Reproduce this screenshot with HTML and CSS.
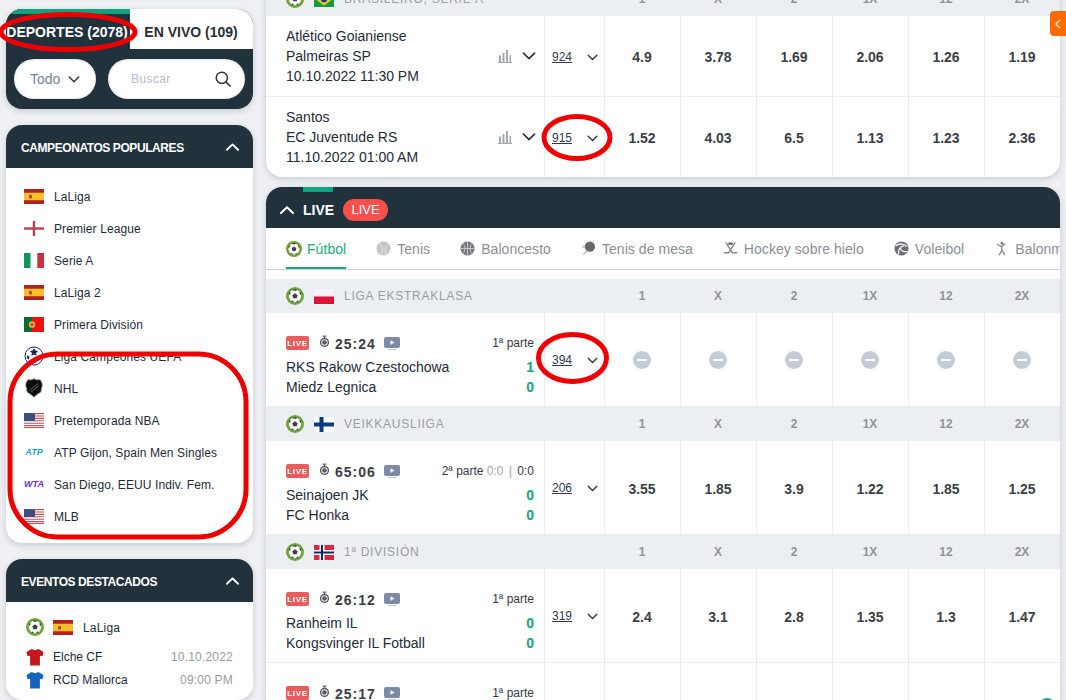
FILE: index.html
```html
<!DOCTYPE html>
<html lang="es">
<head>
<meta charset="utf-8">
<title>Apuestas</title>
<link rel="stylesheet" href="styles.css">
</head>
<body>
<svg class="defs" width="0" height="0" aria-hidden="true">
  <symbol id="chev" viewBox="0 0 14 8"><path d="M1.5 1.2 7 6.6l5.5-5.4" fill="none" stroke="currentColor" stroke-width="1.7" stroke-linecap="round" stroke-linejoin="round"/></symbol>
  <symbol id="up" viewBox="0 0 14 8"><path d="M1 7 7 1.2 13 7" fill="none" stroke="currentColor" stroke-width="2" stroke-linecap="round" stroke-linejoin="round"/></symbol>
  <symbol id="ball" viewBox="0 0 18 18"><circle cx="9" cy="9" r="7.6" fill="#fff" stroke="#6fa43a" stroke-width="2.8"/><path d="M9 6.200 11.700 8.200 10.700 11.200H7.300L6.300 8.200Z" fill="#3c4048"/><path d="M6.800 3 9 4l2.200-1-.7-.8h-3ZM3 8.200l1.500-1.700-.4-2L3 6ZM15 8.200l-1.500-1.700.4-2L15 6ZM5.200 14l1.700-.6.9 1.700-1.500-.2ZM12.800 14l-1.700-.6-.9 1.700 1.500-.2Z" fill="#3c4048"/></symbol>
  <symbol id="es" viewBox="0 0 20 15"><rect width="20" height="15" fill="#b3201f"/><rect y="3.750" width="20" height="7.500" fill="#f5c02a"/><rect x="5" y="6" width="3" height="3.400" rx=".6" fill="#b5471e"/></symbol>
  <symbol id="en" viewBox="0 0 20 15"><rect width="20" height="15" fill="#fff"/><rect y="6.300" width="20" height="2.400" fill="#bf4054"/><rect x="8.800" width="2.400" height="15" fill="#bf4054"/></symbol>
  <symbol id="it" viewBox="0 0 20 15"><rect width="6.700" height="15" fill="#12935a"/><rect x="6.700" width="6.600" height="15" fill="#fff"/><rect x="13.300" width="6.700" height="15" fill="#cd2f42"/></symbol>
  <symbol id="pt" viewBox="0 0 20 15"><rect width="20" height="15" fill="#ef1010"/><rect width="8" height="15" fill="#0a6a32"/><circle cx="8" cy="7.500" r="3.200" fill="#e9b83a"/><circle cx="8" cy="7.500" r="1.600" fill="#c7402c"/></symbol>
  <symbol id="us" viewBox="0 0 20 15"><rect width="20" height="15" fill="#fff"/><path d="M0 .6h20M0 3h20M0 5.400h20M0 7.800h20M0 10.200h20M0 12.600h20M0 14.500h20" stroke="#c0505a" stroke-width="1.100"/><rect width="11" height="8" fill="#3f4d82"/></symbol>
  <symbol id="pl" viewBox="0 0 20 15"><rect width="20" height="7.500" fill="#f4f4f6"/><rect y="7.500" width="20" height="7.500" fill="#dc143c"/></symbol>
  <symbol id="fi" viewBox="0 0 20 15"><rect width="20" height="15" fill="#fff"/><rect y="5.500" width="20" height="4" fill="#0b3a80"/><rect x="5.500" width="4" height="15" fill="#0b3a80"/></symbol>
  <symbol id="no" viewBox="0 0 20 15"><rect width="20" height="15" fill="#d9283a"/><rect y="5" width="20" height="5" fill="#fff"/><rect x="5.500" width="5" height="15" fill="#fff"/><rect y="6.500" width="20" height="2" fill="#0a2a6c"/><rect x="7" width="2" height="15" fill="#0a2a6c"/></symbol>
  <symbol id="br" viewBox="0 0 20 15"><rect width="20" height="15" fill="#169b3e"/><path d="M10 1.500 18 7.500 10 13.500 2 7.500Z" fill="#f2d21d"/><circle cx="10" cy="7.500" r="3" fill="#1f3c8c"/></symbol>
  <symbol id="ucl" viewBox="0 0 20 20"><circle cx="10" cy="10" r="9" fill="#fff" stroke="#1c2b59" stroke-width="1"/><path d="m10 2 1.300 2.600 2.800.3-2 2 .5 2.800L10 8.400 7.400 9.700l.5-2.800-2-2 2.800-.3ZM3.500 9l1.900 1.800-.4 2.600-2.300-1.200ZM16.500 9l-1.900 1.800.4 2.600 2.300-1.200ZM10 12.500l2.200 1.600-.8 2.600H8.600l-.8-2.600Z" fill="#1c2b59"/></symbol>
  <symbol id="nhl" viewBox="0 0 18 20"><path d="M9 .6c1.800 1.300 3.600 1.500 6 .9 1.500 2 2.300 3.600 2.300 5.400 0 2.400-1 3.500-1 5.500 0 2.800-3.800 2.800-7.300 7-3.500-4.200-7.300-4.200-7.300-7 0-2-1-3.100-1-5.500C.7 5.100 1.500 3.500 3 1.500c2.400.6 4.200.4 6-.9Z" fill="#0c0c0e" stroke="#a9aab0" stroke-width=".9"/><path d="M4.500 12.500 13 5.500M6 14l8-6.500" stroke="#77787e" stroke-width=".8"/></symbol>
  <symbol id="shirt" viewBox="0 0 18 18"><path d="M5.600 1 9 2.200 12.400 1 17.500 4l-1 4.300-2.600-.6V17.500H4.100V7.700l-2.600.6L.5 4Z" fill="currentColor"/></symbol>
  <symbol id="bars" viewBox="0 0 14 14"><path d="M1 6.500h2V13H1ZM4.500 4H6.500V13h-2ZM8 1h2v12H8ZM11.500 6H13v7h-1.500Z" fill="#a5a9b1"/><rect y="13" width="14" height="1" fill="#a5a9b1"/></symbol>
  <symbol id="search" viewBox="0 0 16 16"><circle cx="6.800" cy="6.800" r="5.600" fill="none" stroke="#30353d" stroke-width="1.500"/><path d="m11 11 4 4" stroke="#30353d" stroke-width="1.700" stroke-linecap="round"/></symbol>
  <symbol id="watch" viewBox="0 0 12 13"><rect x="4" y="0" width="4" height="1.300" fill="#565b64"/><rect x="5.300" y="1" width="1.400" height="2" fill="#565b64"/><circle cx="6" cy="7.500" r="5" fill="#565b64"/><circle cx="6" cy="7.500" r="3.500" fill="#e8e9eb"/><circle cx="6" cy="7.500" r="2.400" fill="#565b64"/></symbol>
  <symbol id="tv" viewBox="0 0 16 13"><rect width="16" height="11" rx="2" fill="#7b8ba6"/><path d="M6.500 3.200 10.500 5.500 6.500 7.800Z" fill="#fff"/><rect x="4" y="12" width="8" height="1" fill="#c3cad6"/></symbol>
  <symbol id="tennis" viewBox="0 0 16 16"><circle cx="8" cy="8" r="7.500" fill="#c4c5c8"/><path d="M3 2.500C7 5 8 10 5.500 14.500M13.500 3C10 5 9 10 11 14.800" fill="none" stroke="#e6e6e8" stroke-width="1"/></symbol>
  <symbol id="basket" viewBox="0 0 16 16"><circle cx="8" cy="8" r="7.500" fill="#77797e"/><path d="M.5 8h15M8 .5v15M3 2.500c3 3 3 8 0 11M13 2.500c-3 3-3 8 0 11" fill="none" stroke="#d6d6d8" stroke-width=".9"/></symbol>
  <symbol id="pingpong" viewBox="0 0 16 16"><circle cx="9.500" cy="6" r="5.500" fill="#66686d"/><path d="M6 9.500 2 13.500l1 1.500 4.500-3.700Z" fill="#b9babd"/><circle cx="3" cy="6" r="1.500" fill="#c8c9cc"/></symbol>
  <symbol id="hockey" viewBox="0 0 16 16"><path d="M3 1.500 10 12.500H15M13 1.500 6 12.500H1" fill="none" stroke="#85878c" stroke-width="1.500"/><rect x="5.500" y="1.500" width="5" height="2.500" rx="1" fill="#5e6066"/></symbol>
  <symbol id="volley" viewBox="0 0 16 16"><circle cx="8" cy="8" r="7.500" fill="#6d6f75"/><path d="M2 5c4-3 9-2 12 1M5 14c-1-4 1-8 6-9M14 11c-3 1-6 0-7-3" fill="none" stroke="#f1f1f2" stroke-width="1.400"/></symbol>
  <symbol id="handball" viewBox="0 0 16 16"><circle cx="8.500" cy="2.500" r="1.500" fill="#75777c"/><path d="M3 3.500 8 6l4-3M8 6l.5 4-3 5M8.500 10l3 5" fill="none" stroke="#8b8d92" stroke-width="1.400"/></symbol>
  <symbol id="left" viewBox="0 0 6 10"><path d="M5 1 1 5l4 4" fill="none" stroke="#ffd9b8" stroke-width="1.600"/></symbol>
</svg>

<div class="page">
  <aside class="side">
    <section class="panel finder">
      <div class="modes">
        <div class="mode mode-on">DEPORTES (2078)</div>
        <div class="mode">EN VIVO (109)</div>
      </div>
      <div class="filters">
        <div class="pill pill-todo">Todo <svg class="chev-l"><use href="#chev"/></svg></div>
        <div class="pill pill-find"><span>Buscar</span><svg class="ico-search"><use href="#search"/></svg></div>
      </div>
    </section>

    <section class="panel">
      <header class="panel-head"><span>CAMPEONATOS POPULARES</span><svg class="up"><use href="#up"/></svg></header>
      <ul class="champs">
        <li><svg class="flag"><use href="#es"/></svg>LaLiga</li>
        <li><svg class="flag"><use href="#en"/></svg>Premier League</li>
        <li><svg class="flag"><use href="#it"/></svg>Serie A</li>
        <li><svg class="flag"><use href="#es"/></svg>LaLiga 2</li>
        <li><svg class="flag"><use href="#pt"/></svg>Primera División</li>
        <li><svg class="flag-tall"><use href="#ucl"/></svg>Liga Campeones UEFA</li>
        <li><svg class="flag-tall"><use href="#nhl"/></svg>NHL</li>
        <li><svg class="flag"><use href="#us"/></svg>Pretemporada NBA</li>
        <li><span class="brand brand-atp">ATP</span>ATP Gijon, Spain Men Singles</li>
        <li><span class="brand brand-wta">WTA</span>San Diego, EEUU Indiv. Fem.</li>
        <li><svg class="flag"><use href="#us"/></svg>MLB</li>
      </ul>
    </section>

    <section class="panel">
      <header class="panel-head"><span>EVENTOS DESTACADOS</span><svg class="up"><use href="#up"/></svg></header>
      <div class="event">
        <div class="event-league"><svg class="ball"><use href="#ball"/></svg><svg class="flag"><use href="#es"/></svg><span>LaLiga</span></div>
        <div class="event-team"><svg class="shirt shirt-red"><use href="#shirt"/></svg><span class="event-name">Elche CF</span><span class="event-when">10.10.2022</span></div>
        <div class="event-team"><svg class="shirt shirt-blue"><use href="#shirt"/></svg><span class="event-name">RCD Mallorca</span><span class="event-when">09:00 PM</span></div>
      </div>
    </section>
  </aside>

  <main class="main">
    <section class="card">
      <div class="grid group">
        <div class="group-name"><svg class="ball"><use href="#ball"/></svg><svg class="flag"><use href="#br"/></svg><span>BRASILEIRO, SERIE A</span></div>
        <b>1</b><b>X</b><b>2</b><b>1X</b><b>12</b><b>2X</b>
      </div>
      <div class="grid row row-pre row-first">
        <div class="match-pre">
          <div class="teams"><div>Atlético Goianiense</div><div>Palmeiras SP</div><div>10.10.2022 11:30 PM</div></div>
          <svg class="bars"><use href="#bars"/></svg><svg class="chev-m"><use href="#chev"/></svg>
        </div>
        <div class="count"><u>924</u><svg class="chev-s"><use href="#chev"/></svg></div>
        <div class="odd">4.9</div><div class="odd">3.78</div><div class="odd">1.69</div><div class="odd">2.06</div><div class="odd">1.26</div><div class="odd">1.19</div>
      </div>
      <div class="grid row row-pre">
        <div class="match-pre">
          <div class="teams"><div>Santos</div><div>EC Juventude RS</div><div>11.10.2022 01:00 AM</div></div>
          <svg class="bars"><use href="#bars"/></svg><svg class="chev-m"><use href="#chev"/></svg>
        </div>
        <div class="count"><u>915</u><svg class="chev-s"><use href="#chev"/></svg></div>
        <div class="odd">1.52</div><div class="odd">4.03</div><div class="odd">6.5</div><div class="odd">1.13</div><div class="odd">1.23</div><div class="odd">2.36</div>
      </div>
    </section>

    <section class="card card-live">
      <header class="live-head">
        <svg class="up"><use href="#up"/></svg>
        <span class="live-title">LIVE</span>
        <span class="live-pill">LIVE</span>
      </header>
      <nav class="tabs">
        <a class="tab tab-on"><svg class="tab-ico"><use href="#ball"/></svg>Fútbol</a>
        <a class="tab"><svg class="tab-ico"><use href="#tennis"/></svg>Tenis</a>
        <a class="tab"><svg class="tab-ico"><use href="#basket"/></svg>Baloncesto</a>
        <a class="tab"><svg class="tab-ico"><use href="#pingpong"/></svg>Tenis de mesa</a>
        <a class="tab"><svg class="tab-ico"><use href="#hockey"/></svg>Hockey sobre hielo</a>
        <a class="tab"><svg class="tab-ico"><use href="#volley"/></svg>Voleibol</a>
        <a class="tab"><svg class="tab-ico"><use href="#handball"/></svg>Balonmano</a>
      </nav>

      <div class="grid group">
        <div class="group-name"><svg class="ball"><use href="#ball"/></svg><svg class="flag"><use href="#pl"/></svg><span>LIGA EKSTRAKLASA</span></div>
        <b>1</b><b>X</b><b>2</b><b>1X</b><b>12</b><b>2X</b>
      </div>
      <div class="grid row row-live">
        <div class="match-live">
          <div class="clock"><span class="badge">LIVE</span><svg class="watch"><use href="#watch"/></svg><span class="time">25:24</span><svg class="tv"><use href="#tv"/></svg><span class="period">1ª parte</span></div>
          <div class="side-score"><span>RKS Rakow Czestochowa</span><b>1</b></div>
          <div class="side-score"><span>Miedz Legnica</span><b>0</b></div>
        </div>
        <div class="count"><u>394</u><svg class="chev-s"><use href="#chev"/></svg></div>
        <div class="odd"><i class="lock"></i></div><div class="odd"><i class="lock"></i></div><div class="odd"><i class="lock"></i></div><div class="odd"><i class="lock"></i></div><div class="odd"><i class="lock"></i></div><div class="odd"><i class="lock"></i></div>
      </div>

      <div class="grid group">
        <div class="group-name"><svg class="ball"><use href="#ball"/></svg><svg class="flag"><use href="#fi"/></svg><span>VEIKKAUSLIIGA</span></div>
        <b>1</b><b>X</b><b>2</b><b>1X</b><b>12</b><b>2X</b>
      </div>
      <div class="grid row row-live">
        <div class="match-live">
          <div class="clock"><span class="badge">LIVE</span><svg class="watch"><use href="#watch"/></svg><span class="time">65:06</span><svg class="tv"><use href="#tv"/></svg><span class="period">2ª parte <em>0:0</em> <em class="sep">|</em> 0:0</span></div>
          <div class="side-score"><span>Seinajoen JK</span><b>0</b></div>
          <div class="side-score"><span>FC Honka</span><b>0</b></div>
        </div>
        <div class="count"><u>206</u><svg class="chev-s"><use href="#chev"/></svg></div>
        <div class="odd">3.55</div><div class="odd">1.85</div><div class="odd">3.9</div><div class="odd">1.22</div><div class="odd">1.85</div><div class="odd">1.25</div>
      </div>

      <div class="grid group">
        <div class="group-name"><svg class="ball"><use href="#ball"/></svg><svg class="flag"><use href="#no"/></svg><span>1ª DIVISIÓN</span></div>
        <b>1</b><b>X</b><b>2</b><b>1X</b><b>12</b><b>2X</b>
      </div>
      <div class="grid row row-live">
        <div class="match-live">
          <div class="clock"><span class="badge">LIVE</span><svg class="watch"><use href="#watch"/></svg><span class="time">26:12</span><svg class="tv"><use href="#tv"/></svg><span class="period">1ª parte</span></div>
          <div class="side-score"><span>Ranheim IL</span><b>0</b></div>
          <div class="side-score"><span>Kongsvinger IL Fotball</span><b>0</b></div>
        </div>
        <div class="count"><u>319</u><svg class="chev-s"><use href="#chev"/></svg></div>
        <div class="odd">2.4</div><div class="odd">3.1</div><div class="odd">2.8</div><div class="odd">1.35</div><div class="odd">1.3</div><div class="odd">1.47</div>
      </div>
      <div class="grid row row-live">
        <div class="match-live">
          <div class="clock"><span class="badge">LIVE</span><svg class="watch"><use href="#watch"/></svg><span class="time">25:17</span><svg class="tv"><use href="#tv"/></svg><span class="period">1ª parte</span></div>
        </div>
        <div class="count"></div>
        <div class="odd"></div><div class="odd"></div><div class="odd"></div><div class="odd"></div><div class="odd"></div><div class="odd"></div>
      </div>
    </section>
  </main>
</div>

<div class="drawer"><svg class="drawer-ico"><use href="#left"/></svg></div>
<div class="to-top"></div>

<svg class="marks" viewBox="0 0 1066 700" aria-hidden="true">
  <ellipse cx="68" cy="32" rx="67" ry="17.500" />
  <ellipse cx="577" cy="137.500" rx="33" ry="21" />
  <ellipse cx="572.500" cy="358" rx="34" ry="23.500" />
  <rect x="10" y="354" width="236" height="183" rx="48" />
</svg>
</body>
</html>
```
FILE: styles.css
```css
* { box-sizing: border-box; }
html, body { margin: 0; height: 700px; overflow: hidden; }
body {
  position: relative;
  background: #eef0f3;
  font-family: "Liberation Sans", Arial, sans-serif;
  color: #232b38;
}
svg { display: block; flex: none; }
.defs { position: absolute; }
.page { display: flex; align-items: flex-start; gap: 13px; padding-left: 6px; }

/* sidebar */
.side { width: 247px; flex: none; display: flex; flex-direction: column; gap: 16px; padding-top: 9px; }
.panel { background: #fff; border-radius: 16px; overflow: hidden; box-shadow: 0 2px 6px rgba(40, 50, 60, .2); }
.finder { background: #22323c; height: 100px; }
.modes { display: flex; height: 40px; }
.mode {
  flex: 1; display: flex; align-items: center; justify-content: center;
  background: #fff; color: #2a2f36; font-size: 14px; font-weight: 700;
  padding-top: 6px; padding-right: 1px;
  white-space: nowrap;
}
.mode-on { flex: none; width: 124px; background: #22323c; color: #fff; border-top: 5px solid #0fa37f; padding-top: 1px; padding-right: 2px; }
.filters { display: flex; gap: 12px; padding: 10px 8px 0; }
.pill { height: 40px; background: #fff; border-radius: 20px; display: flex; align-items: center; }
.pill-todo { width: 82px; padding-left: 16px; gap: 8px; color: #7a8195; font-size: 14px; box-shadow: inset 0 0 3px rgba(120, 130, 150, .4); }
.pill-find { flex: 1; padding: 0 14px 0 23px; justify-content: space-between; color: #b6bbc8; font-size: 12px; letter-spacing: .4px; box-shadow: inset 0 0 3px rgba(120, 130, 150, .4); }
.chev-l { width: 12px; height: 7px; color: #30353d; }
.ico-search { width: 16px; height: 16px; }
.panel-head {
  height: 43px; background: #22323c; color: #fff; font-size: 12px; font-weight: 700;
  display: flex; align-items: center; justify-content: space-between; padding: 0 14px 0 15px;
  letter-spacing: -.42px;
}
.panel-head span { padding-top: 2px; }
.up { width: 13px; height: 8px; color: #fff; }
.champs { list-style: none; margin: 0; padding: 12px 0 11px 18px; }
.champs li { height: 32px; padding-top: 2px; display: flex; align-items: center; gap: 10px; font-size: 12px; letter-spacing: .1px; }
.champs svg, .champs .brand { margin-top: -2px; }
.flag { width: 20px; height: 15px; }
.flag-tall { width: 20px; height: 20px; }
.brand { width: 20px; font-size: 9px; font-weight: 700; font-style: italic; letter-spacing: 0; text-align: center; }
.brand-atp { color: #1ba3d6; }
.brand-wta { color: #6a2bd9; }
.event { padding: 16px 20px 20px; height: 98px; }
.event-league { display: flex; align-items: center; height: 18px; font-size: 12px; letter-spacing: .2px; }
.event-league .flag { margin-left: 9px; }
.event-league span { margin-left: 10px; padding-top: 1px; }
.event-team { display: flex; align-items: center; height: 23px; font-size: 12px; }
.event-league + .event-team { margin-top: 9px; }
.event-name { margin-left: 9px; flex: 1; }
.event-when { color: #9a9a9c; letter-spacing: .2px; }
.ball { width: 18px; height: 18px; }
.shirt { width: 18px; height: 18px; }
.shirt-red { color: #c2181c; }
.shirt-blue { color: #1463c0; }

/* main */
.main { width: 794px; flex: none; margin-top: -18px; display: flex; flex-direction: column; gap: 10px; }
.card { background: #fff; border-radius: 16px; overflow: hidden; box-shadow: 0 2px 6px rgba(40, 50, 60, .2); }
.grid { display: grid; grid-template-columns: 278px 60px repeat(6, 76px); }
.group { height: 34px; background: #eceff2; align-items: center; font-size: 12px; color: #8f949b; }
.group b { text-align: center; }
.group-name { grid-column: span 2; display: flex; align-items: center; padding-left: 20px; gap: 10px; letter-spacing: .75px; color: #999da4; }
.row { border-bottom: 1px solid #ebedf0; }
.row:last-child { border-bottom: 0; }
.row > div + div { border-left: 1px solid #ebedf0; }
.row-pre { height: 80px; }
.row-first { height: 81px; }
.row-live { height: 94px; }
.match-pre { display: flex; align-items: center; padding: 0 8px 0 20px; }
.teams { flex: 1; font-size: 14px; line-height: 20px; }
.bars { width: 14px; height: 14px; }
.chev-m { width: 14px; height: 8px; margin-left: 10px; color: #30353d; }
.count { display: flex; align-items: center; padding: 0 6px 0 7px; justify-content: space-between; font-size: 12px; color: #2c3a52; }
.row-pre .count { padding-top: 2px; }
.chev-s { width: 11px; height: 7px; color: #30353d; }
.odd { display: flex; align-items: center; justify-content: center; padding: 2px 1px 0 0; font-size: 14px; font-weight: 700; color: #3b3f46; }
.lock { width: 18px; height: 18px; margin-top: -2px; border-radius: 50%; background: #c5cbd8; display: flex; align-items: center; justify-content: center; }
.lock::after { content: ""; width: 10px; height: 2px; background: #fff; }

.card-live { border-bottom-left-radius: 0; border-bottom-right-radius: 0; }
.live-head { position: relative; height: 41px; background: #22323c; display: flex; align-items: center; padding: 4px 0 0 14px; color: #fff; }
.live-head::before { content: ""; position: absolute; left: 37px; top: 0; width: 30px; height: 5px; background: #0fa37f; }
.live-head .up { width: 14px; height: 8px; }
.live-title { margin-left: 9px; font-size: 14px; font-weight: 700; }
.live-pill { margin-left: 9px; width: 45px; height: 22px; border-radius: 11px; background: #f74e4e; font-size: 13px; font-weight: 400; display: flex; align-items: center; justify-content: center; }
.tabs { height: 42px; display: flex; gap: 30px; padding-left: 20px; border-bottom: 1px solid #cfd3d7; margin-bottom: 9px; overflow: hidden; white-space: nowrap; letter-spacing: .05px; }
.tab { height: 41px; display: flex; align-items: center; gap: 6px; font-size: 14px; color: #8a8e96; flex: none; }
.tab-on { color: #1ea785; border-bottom: 2px solid #1ea785; height: 41px; padding-top: 2px; gap: 5px; }
.tab-ico { width: 15px; height: 15px; }
.tab-on .tab-ico { width: 16px; height: 16px; }
.match-live { padding: 20px 10px 10px 20px; }
.clock { height: 20px; display: flex; align-items: center; }
.badge { width: 23px; height: 14px; border-radius: 2px; background: #e85c5c; color: #fff; font-size: 8px; font-weight: 700; letter-spacing: .7px; display: flex; align-items: center; justify-content: center; }
.watch { width: 11px; height: 13px; margin-left: 10px; margin-top: -3px; }
.time { margin-left: 5px; padding-top: 1px; font-size: 14px; font-weight: 700; letter-spacing: 1px; color: #3a3e46; }
.tv { width: 16px; height: 13px; margin-left: 8px; }
.period { margin-left: auto; font-size: 12px; color: #333a46; }
.period em { font-style: normal; color: #a2a5ab; }
.period .sep { margin: 0 2px; }
.side-score { height: 20px; display: flex; align-items: center; justify-content: space-between; font-size: 14px; }
.clock + .side-score { margin-top: 4px; }
.side-score b { color: #12a782; }

/* things over the page */
.drawer { position: absolute; right: 0; top: 11px; width: 16px; height: 25px; border-radius: 4px 0 0 4px; background: #ff6a00; display: flex; align-items: center; justify-content: center; }
.drawer-ico { width: 6px; height: 10px; }
.to-top { position: absolute; right: 11px; top: 698px; width: 16px; height: 16px; border-radius: 8px 8px 0 0; background: #1ea785; }
.marks { position: absolute; left: 0; top: 0; width: 1066px; height: 700px; pointer-events: none; fill: none; stroke: #ee0000; stroke-width: 5; }
```
